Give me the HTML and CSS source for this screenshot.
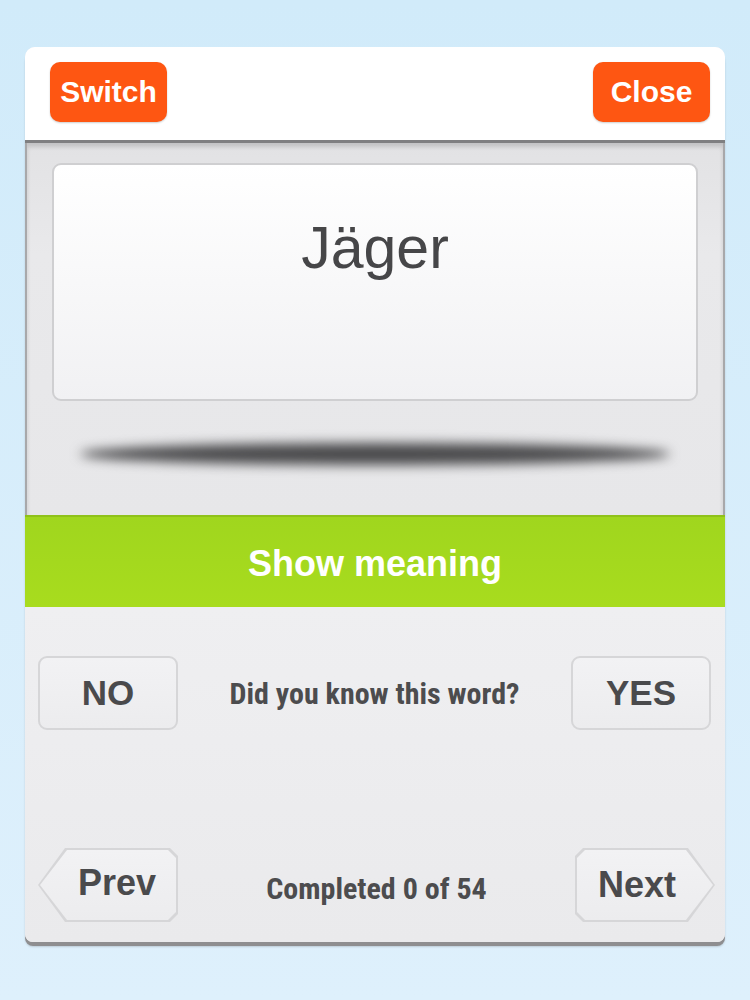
FILE: index.html
```html
<!DOCTYPE html>
<html>
<head>
<meta charset="utf-8">
<link rel="stylesheet" href="styles.css">
</head>
<body>
<div class="card">
  <div class="header">
    <div class="obtn">Switch</div>
    <div class="obtn">Close</div>
  </div>
  <div class="stage">
    <div class="word-card"><span class="word">Jäger</span></div>
    <div class="shadow"></div>
  </div>
  <div class="show">Show meaning</div>
  <div class="lower">
    <div class="row">
      <div class="gbtn">NO</div>
      <div class="small">Did you know this word?</div>
      <div class="gbtn">YES</div>
    </div>
    <div class="row nav">
      <div class="arrow prev"><div class="arrow-in">Prev</div></div>
      <div class="small">Completed 0 of 54</div>
      <div class="arrow next"><div class="arrow-in">Next</div></div>
    </div>
  </div>
</div>
</body>
</html>
```
FILE: styles.css
```css
html, body { margin: 0; padding: 0; }
body {
  width: 750px;
  height: 1000px;
  background: linear-gradient(#d1ebfa, #def0fc);
  font-family: "Liberation Sans", Arial, sans-serif;
  overflow: hidden;
}
.card {
  margin: 47px 0 0 25px;
  width: 700px;
  border-radius: 10px 10px 8px 8px;
  box-shadow: 0 4px 0 #8e8e90, 0 5px 2px rgba(0,0,0,0.15);
  overflow: hidden;
  background: #efeff1;
}
.header {
  height: 96px;
  background: #fff;
  display: flex;
  justify-content: space-between;
  padding: 15px 15px 0 25px;
  box-sizing: border-box;
  border-bottom: 3px solid #7f7f81;
}
.obtn {
  width: 117px;
  height: 60px;
  border-radius: 10px;
  background: #fe5612;
  color: #fff;
  font-weight: bold;
  font-size: 30px;
  display: flex;
  align-items: center;
  justify-content: center;
  box-shadow: 0 1px 2px rgba(0,0,0,0.2);
}
.stage {
  height: 372px;
  background: linear-gradient(#e2e2e4, #e9e9eb 30%, #e7e7e9);
  border-left: 2px solid #a8a8aa;
  border-right: 2px solid #a8a8aa;
  box-sizing: border-box;
  padding: 20px 25px 0 25px;
  box-shadow: inset 0 4px 4px rgba(0,0,0,0.14);
}
.word-card {
  height: 238px;
  box-sizing: border-box;
  border: 2px solid #cfcfd1;
  border-radius: 9px;
  background: linear-gradient(#ffffff, #f1f1f3);
  display: flex;
  justify-content: center;
  padding-top: 50px;
}
.word {
  font-size: 59px;
  color: #464648;
  line-height: 66px;
  height: 66px;
}
.shadow {
  margin: 42px auto 0;
  width: 590px;
  height: 22px;
  border-radius: 50%;
  background: #4a4a4c;
  filter: blur(6px);
}
.show {
  height: 92px;
  background: linear-gradient(#a0d61e, #a8dc1e);
  border-top: 2px solid #8fc11a;
  box-sizing: border-box;
  color: #fff;
  font-size: 36px;
  font-weight: bold;
  display: flex;
  align-items: center;
  justify-content: center;
  padding-top: 4px;
}
.lower {
  height: 335px;
  padding: 49px 14px 0 13px;
  box-sizing: border-box;
  background: linear-gradient(#efeff1, #eaeaec);
}
.row {
  display: flex;
  justify-content: space-between;
  align-items: center;
  height: 74px;
}
.row.nav { margin-top: 118px; }
.gbtn {
  width: 140px;
  height: 74px;
  box-sizing: border-box;
  border: 2px solid #d6d6d8;
  border-radius: 9px;
  background: linear-gradient(#f2f2f4, #ececee);
  color: #4a4a4c;
  font-size: 35px;
  font-weight: bold;
  display: flex;
  align-items: center;
  justify-content: center;
}
.small {
  font-family: "Liberation Sans Narrow", "Roboto Condensed", "Liberation Sans", sans-serif;
  font-weight: bold;
  font-size: 30px;
  color: #4c4c4e;
}
.nav .small { margin-top: 6px; }
.arrow {
  width: 140px;
  height: 74px;
  background: #d6d6d8;
  padding: 2px;
  box-sizing: border-box;
}
.arrow-in {
  width: 100%;
  height: 100%;
  background: linear-gradient(#f2f2f4, #ececee);
  color: #4a4a4c;
  font-size: 36px;
  font-weight: bold;
  display: flex;
  align-items: center;
  justify-content: center;
}
.prev, .prev .arrow-in {
  clip-path: polygon(0 50%, 27px 0, calc(100% - 8px) 0, 100% 8px, 100% calc(100% - 8px), calc(100% - 8px) 100%, 27px 100%);
}
.prev .arrow-in { padding-left: 18px; padding-bottom: 4px; box-sizing: border-box; }
.next { margin-right: -4px; }
.next, .next .arrow-in {
  clip-path: polygon(8px 0, calc(100% - 27px) 0, 100% 50%, calc(100% - 27px) 100%, 8px 100%, 0 calc(100% - 8px), 0 8px);
}
.next .arrow-in { padding-right: 16px; box-sizing: border-box; }
```
